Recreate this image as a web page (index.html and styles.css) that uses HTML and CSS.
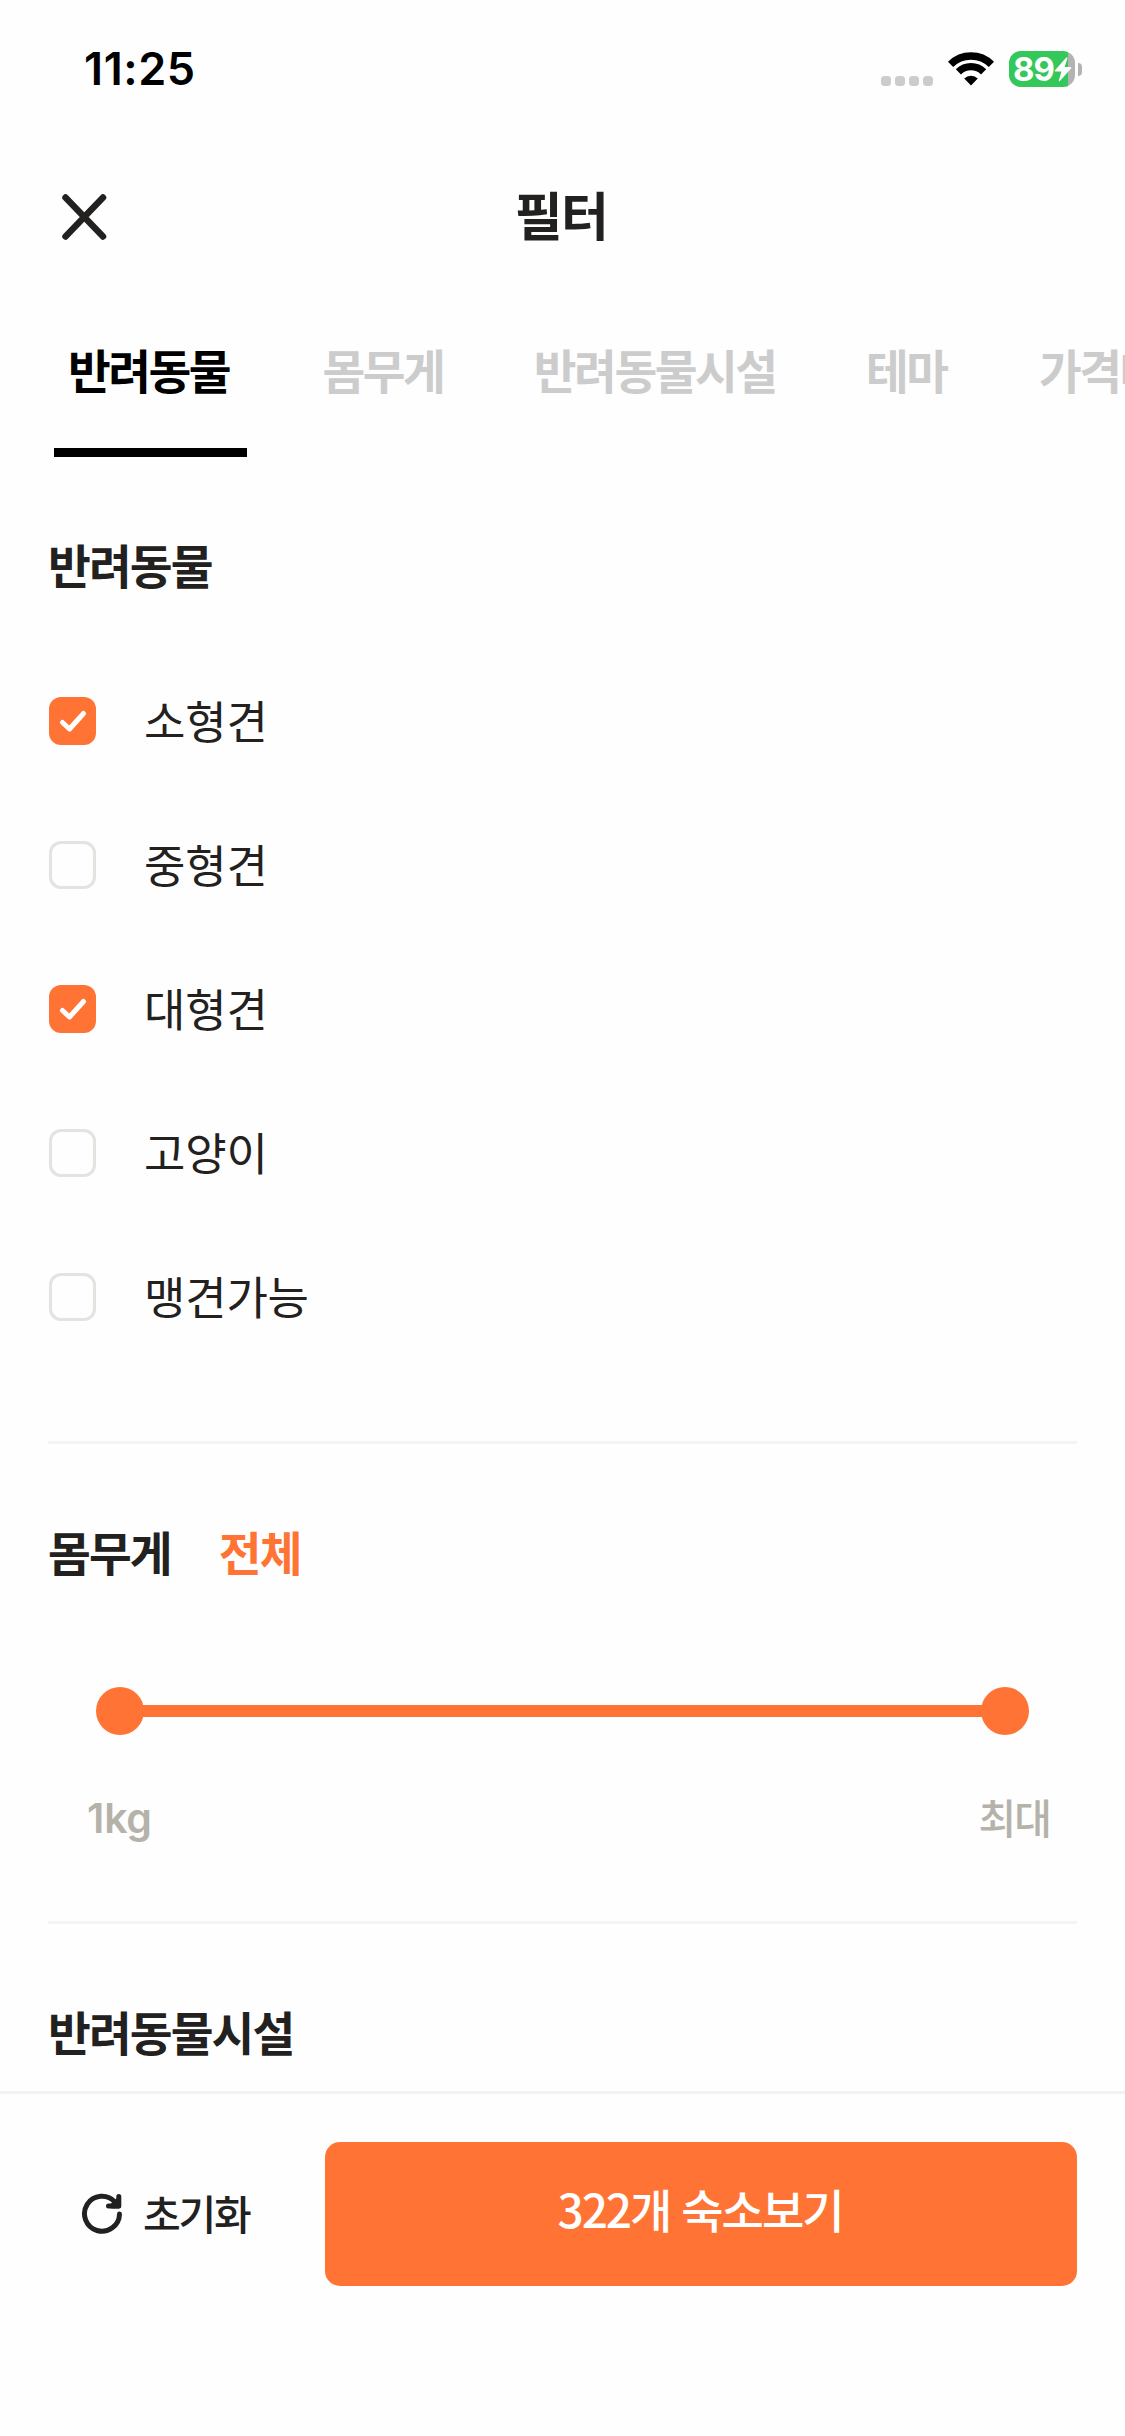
FILE: index.html
```html
<!DOCTYPE html>
<html lang="ko">
<head>
<meta charset="utf-8">
<title>필터</title>
<link rel="stylesheet" href="styles.css">
</head>
<body>
<div class="screen">
  <div class="status">
    <span class="clock">11:25</span>
    <div class="indicators">
      <div class="signal"><i></i><i></i><i></i><i></i></div>
      <svg class="wifi" width="46" height="34" viewBox="0 0 46 34">
        <g fill="none" stroke="#000" stroke-width="7.4">
          <path d="M2.6 12.4A29 29 0 0 1 43.4 12.4"/>
          <path d="M10.4 19.8A18 18 0 0 1 35.6 19.8"/>
        </g>
        <path d="M16.2 26.4a9.8 9.8 0 0 1 13.600 0L23 33.600z"/>
      </svg>
      <div class="battery">
        <div class="level"><span class="percent">89</span>
          <svg class="bolt" width="18" height="25" viewBox="0 0 18 25"><path fill="#fff" d="M12.3.6 1 13.3q-.8 1.200.6 1.200H7.500L4.800 23.400q0 1.300 1.100.500L17 11.400q.8-1.300-.7-1.300H10.600L13.500 1.500q0-1.500-1.200-.9z"/></svg>
        </div>
        <div class="nub"></div>
      </div>
    </div>
  </div>

  <header class="header">
    <svg class="close" width="45" height="46" viewBox="0 0 45 46"><path d="M3.500 3.500 41 42.500M41 3.500 3.500 42.500" stroke="#222120" stroke-width="6.500" stroke-linecap="round"/></svg>
    <h1 class="title">필터</h1>
  </header>

  <nav class="tabs">
    <span class="tab active">반려동물</span>
    <span class="tab">몸무게</span>
    <span class="tab">반려동물시설</span>
    <span class="tab">테마</span>
    <span class="tab">가격대</span>
  </nav>

  <main class="content">
    <section class="section pets">
      <h2 class="heading">반려동물</h2>
      <ul class="options">
        <li class="option"><span class="box checked"><svg width="47" height="48" viewBox="0 0 47 48"><path d="M13.500 25.500 20.500 32 34.500 16.500"/></svg></span><span class="label">소형견</span></li>
        <li class="option"><span class="box"></span><span class="label">중형견</span></li>
        <li class="option"><span class="box checked"><svg width="47" height="48" viewBox="0 0 47 48"><path d="M13.500 25.500 20.500 32 34.500 16.500"/></svg></span><span class="label">대형견</span></li>
        <li class="option"><span class="box"></span><span class="label">고양이</span></li>
        <li class="option"><span class="box"></span><span class="label">맹견가능</span></li>
      </ul>
    </section>
    <section class="section weight">
      <h2 class="heading">몸무게 <span class="value">전체</span></h2>
      <div class="slider"><span class="thumb"></span><span class="track"></span><span class="thumb"></span></div>
      <div class="range"><span class="min">1kg</span><span class="max">최대</span></div>
    </section>
    <section class="section facilities">
      <h2 class="heading">반려동물시설</h2>
    </section>
  </main>

  <footer class="footer">
    <div class="reset">
      <svg width="42" height="42" viewBox="0 0 42 42" fill="none" stroke="#222120" stroke-width="5" stroke-linecap="round" stroke-linejoin="round"><path d="M38.500 21A17.500 17.500 0 1 1 34 9L37 12"/><path d="M37.800 3.500V13H27.500"/><path d="M37.500 7V13H31z" fill="#222120"/></svg>
      <span class="reset-label">초기화</span>
    </div>
    <div class="submit">322개 숙소보기</div>
  </footer>
</div>
</body>
</html>
```
FILE: styles.css
```css
* { box-sizing: border-box; }
body { margin: 0; background: #fefefe; }
.screen {
  width: 1125px;
  height: 2436px;
  overflow: hidden;
  display: flex;
  flex-direction: column;
  background: #fefefe;
  color: #222120;
  font-family: "Noto Sans CJK KR", sans-serif;
}

/* Status bar */
.status {
  height: 138px;
  padding: 0 43px 0 84px;
  display: flex;
  justify-content: space-between;
  align-items: center;
}
.clock { font: 600 45px/60px Inter, sans-serif; color: #000; letter-spacing: 0.6px; }
.indicators { display: flex; align-items: center; gap: 15px; }
.signal { display: flex; gap: 4px; padding-top: 23px; }
.signal i { width: 10px; height: 10px; border-radius: 3.5px; background: #ccc; }
.battery { display: flex; align-items: center; gap: 3px; }
.level {
  width: 66px;
  height: 36px;
  padding-left: 4px;
  border-radius: 12px;
  display: flex;
  align-items: center;
  background: linear-gradient(to right, #34c759 59px, #b3b3b3 59px);
}
.percent { font: 700 33px/36px Inter, sans-serif; letter-spacing: -1px; color: #fff; }
.nub { width: 4px; height: 13px; border-radius: 0 6px 6px 0; background: #b3b3b3; }

/* Header */
.header {
  height: 158px;
  padding: 0 65px 0 62px;
  display: grid;
  grid-template-columns: 45px 1fr 45px;
  align-items: center;
}
.title { margin: 0; padding-bottom: 6px; font-size: 52px; line-height: 60px; font-weight: 700; letter-spacing: -1.6px; text-align: center; }

/* Tabs */
.tabs { height: 161px; padding-left: 54px; display: flex; gap: 61.5px; white-space: nowrap; }
.tab {
  flex: none;
  padding: 39px 15px 0 14px;
  border-bottom: 9px solid transparent;
  font-size: 46.5px;
  line-height: 68px;
  font-weight: 700;
  letter-spacing: -2.5px;
  color: #ccc;
}
.tab.active { width: 193px; color: #000; border-color: #000; }
.tab:last-child { padding-left: 16px; }

/* Filter sections */
.content { height: 1634px; padding: 0 48px; overflow: hidden; }
.section { padding-top: 73px; }
.section + .section { border-top: 3px solid #f4f4f2; }
.heading { margin: 0; font-size: 46.5px; line-height: 68px; font-weight: 700; letter-spacing: -1.9px; }
.pets { height: 984px; }
.options { list-style: none; margin: 51px 0 0; padding: 0 0 0 1px; }
.option { height: 144px; display: flex; align-items: center; gap: 48px; font-size: 45px; font-weight: 400; letter-spacing: -0.2px; }
.label { padding-bottom: 4px; }
.box { width: 47px; height: 48px; border: 3px solid #e3e3e0; border-radius: 12px; }
.box.checked { border: 0; background: #ff7435; }
.box svg { display: block; fill: none; stroke: #fff; stroke-width: 5px; stroke-linecap: round; stroke-linejoin: round; }
.weight { height: 480px; }
.value { margin-left: 37px; color: #ff7435; }
.slider { margin: 102px 48px 0; display: flex; align-items: center; }
.thumb { width: 48px; height: 48px; border-radius: 50%; background: #ff7435; }
.track { flex: 1; height: 12px; margin: 0 -3px; background: #ff7435; }
.range { padding: 51px 27px 0 39px; display: flex; justify-content: space-between; font-size: 41px; line-height: 60px; font-weight: 500; letter-spacing: -2px; color: #b5b2a9; }
.min { padding-top: 2px; font-family: Inter, sans-serif; font-weight: 600; letter-spacing: -0.2px; }

/* Footer */
.footer { height: 345px; padding: 48px 48px 0 81px; border-top: 3px solid #f2f2f1; display: flex; justify-content: space-between; }
.reset { height: 144px; display: flex; align-items: center; gap: 20px; font-size: 41px; font-weight: 500; letter-spacing: -2.200px; }
.reset-label { padding-bottom: 5px; }
.submit {
  width: 752px;
  height: 144px;
  padding-right: 2px;
  border-radius: 15px;
  background: #ff7435;
  color: #fff;
  font-size: 46px;
  line-height: 132px;
  font-weight: 500;
  letter-spacing: -2px;
  text-align: center;
}
```
